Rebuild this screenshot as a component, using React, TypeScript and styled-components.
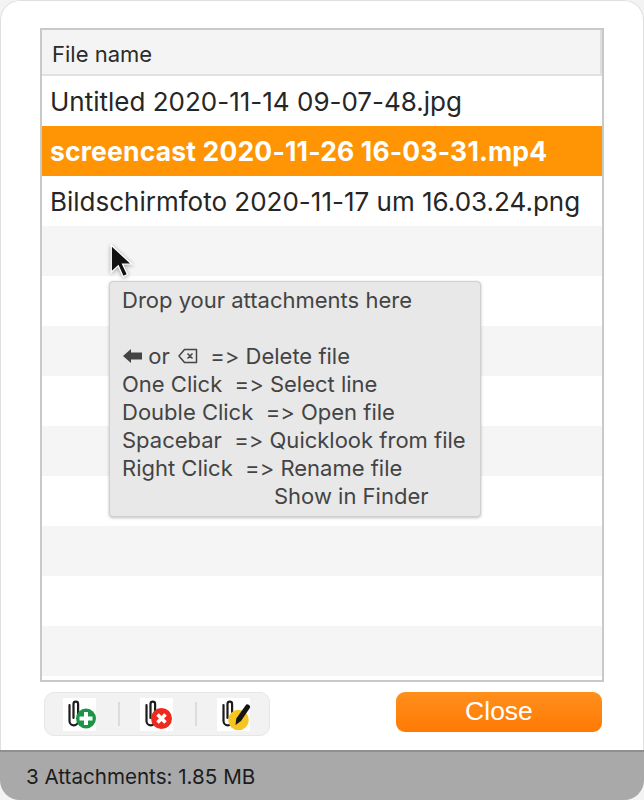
import styled, { createGlobalStyle } from "styled-components";

const GlobalStyle = createGlobalStyle`
  html, body {
    margin: 0;
    padding: 0;
    background: #f3f3f3;
  }
`

const Window = styled.div`
  position: relative;
  width: 644px;
  height: 800px;
  box-sizing: border-box;
  display: flex;
  flex-direction: column;
  overflow: hidden;
  background: #fff;
  border-radius: 20px;
  box-shadow: inset 0 0 0 1px #e0e0e0;
  font-family: Inter, "Noto Sans", sans-serif;
  font-variant-ligatures: none;
  font-feature-settings: "calt" 0, "liga" 0;
  color: #262626;
`

const Content = styled.div`
  flex: 1;
  display: flex;
  flex-direction: column;
  padding: 28px 40px 0;
`

const TableFrame = styled.div`
  height: 654px;
  box-sizing: border-box;
  border: 2px solid #c9c9c9;
  display: flex;
  flex-direction: column;
  overflow: hidden;
`

const Header = styled.div`
  height: 44px;
  flex: none;
  box-sizing: border-box;
  padding: 3px 0 0 10px;
  display: flex;
  align-items: center;
  background: #f4f4f4;
  border-right: 2px solid #dedede;
  font-size: 22px;
  color: #2b2b2b;
`

const HeaderRule = styled.div`
  height: 2px;
  flex: none;
  background: #e2e2e2;
`

const Row = styled.div<{ $tone: "plain" | "stripe" | "selected" }>`
  height: 50px;
  flex: none;
  box-sizing: border-box;
  padding-left: 8px;
  display: flex;
  align-items: center;
  font-size: ${p => (p.$tone === "selected" ? "26.5px" : "26px")};
  font-weight: ${p => (p.$tone === "selected" ? 700 : 400)};
  letter-spacing: ${p => (p.$tone === "selected" ? "0.17px" : "0")};
  color: ${p => (p.$tone === "selected" ? "#fff" : "#262626")};
  background: ${p =>
    p.$tone === "selected" ? "#ff9505" : p.$tone === "stripe" ? "#f5f5f5" : "#fff"};
`

const Tooltip = styled.div`
  position: absolute;
  left: 109px;
  top: 281px;
  width: 372px;
  height: 236px;
  box-sizing: border-box;
  padding: 4px 0 0 12px;
  background: #e8e8e8;
  border: 1px solid #d0d0d0;
  border-radius: 4px;
  box-shadow: 0 1px 3px rgba(0, 0, 0, 0.25);
  font-size: 22px;
  line-height: 28px;
  color: #444;
  white-space: pre;
`

const TipLine = styled.div`
  height: 28px;
  display: flex;
  align-items: center;
`

const TipIndent = styled(TipLine)`
  padding-left: 152px;
`

const ArrowGlyph = styled.svg`
  flex: none;
  display: block;
  margin-left: 1px;
`

const BackspaceGlyph = styled.svg`
  flex: none;
  display: block;
  margin-left: 2px;
`

const Cursor = styled.svg`
  position: absolute;
  left: 108px;
  top: 242px;
  filter: drop-shadow(0 1px 2px rgba(0, 0, 0, 0.35));
`

const Footer = styled.div`
  display: flex;
  justify-content: space-between;
  align-items: flex-start;
  padding: 10px 2px 0 4px;
`

const ToolGroup = styled.div`
  width: 226px;
  height: 44px;
  box-sizing: border-box;
  display: flex;
  align-items: center;
  padding-left: 18px;
  background: #f2f2f2;
  border: 1px solid #e6e6e6;
  border-radius: 10px;
`

const ToolButton = styled.button`
  width: 33px;
  height: 33px;
  flex: none;
  padding: 0;
  border: none;
  background: #fff;
  display: block;
`

const ToolDivider = styled.span`
  width: 2px;
  height: 24px;
  flex: none;
  margin: 0 20px 0 22px;
  background: #dcdcdc;
`

const CloseButton = styled.button`
  width: 206px;
  height: 40px;
  padding: 0 0 2px;
  border: none;
  border-radius: 9px;
  background: linear-gradient(#ff8f1c, #ff7a05);
  color: #fff;
  font-family: "Liberation Sans", Arial, sans-serif;
  font-size: 26.5px;
  line-height: 34px;
`

const StatusBar = styled.div`
  height: 50px;
  flex: none;
  box-sizing: border-box;
  padding: 0 0 0 26px;
  display: flex;
  align-items: center;
  background: #a9a9aa;
  border-top: 2px solid #8f8f90;
  font-size: 20.6px;
  color: #1c1c1c;
`

const files = [
  "Untitled 2020-11-14 09-07-48.jpg",
  "screencast 2020-11-26 16-03-31.mp4",
  "Bildschirmfoto 2020-11-17 um 16.03.24.png",
]

const tone = (i: number) => (i === 1 ? "selected" : i % 2 === 1 ? "stripe" : "plain")

// shared paperclip for the three toolbar icons
const Clip = () => (
  <path
    d="M10.500 20V6a2.300 2.300 0 0 1 4.600 0V23a4.300 4.300 0 0 1-8.600 0V7"
    fill="none"
    stroke="#1c1c1c"
    strokeWidth="2.200"
    strokeLinecap="round"
  />
)

const App = () => {
  const rows = Array.from({ length: 12 }, (_, i) => (
    <Row key={`row_${i}`} $tone={tone(i)}>{files[i] ?? ""}</Row>
  ))
  return (
    <Window>
      <GlobalStyle />
      <Content>
        <TableFrame>
          <Header>File name</Header>
          <HeaderRule />
          {rows}
        </TableFrame>
        <Footer>
          <ToolGroup>
            <ToolButton aria-label="Add attachment">
              <svg width="33" height="33" viewBox="0 0 33 33">
                <Clip />
                <circle cx="23" cy="20.500" r="10" fill="#1c9447" />
                <path d="M23 14v13M16.500 20.500h13" stroke="#fff" strokeWidth="4" />
              </svg>
            </ToolButton>
            <ToolDivider />
            <ToolButton aria-label="Remove attachment">
              <svg width="33" height="33" viewBox="0 0 33 33">
                <Clip />
                <circle cx="21.500" cy="20.500" r="10.500" fill="#ee2a1e" />
                <path d="M17.500 16.500l8 8M25.500 16.500l-8 8" stroke="#fff" strokeWidth="3.600" />
              </svg>
            </ToolButton>
            <ToolDivider />
            <ToolButton aria-label="Rename attachment">
              <svg width="33" height="33" viewBox="0 0 33 33">
                <Clip />
                <circle cx="21.500" cy="22" r="10.300" fill="#f6c521" />
                <path d="M28.500 7.500a2.500 2.500 0 0 1 4 3L24 23l-5.500 4 .8-6.500z" fill="#151515" />
              </svg>
            </ToolButton>
          </ToolGroup>
          <CloseButton>Close</CloseButton>
        </Footer>
      </Content>
      <StatusBar>3 Attachments: 1.85 MB</StatusBar>

      <Cursor width="26" height="39" viewBox="0 0 24 36">
        <path d="M3 3v25l6.500-6 4.500 10 4-2-4.500-9.500H22z" fill="#111" stroke="#fff" strokeWidth="1.200" />
      </Cursor>

      <Tooltip>
        <TipLine>Drop your attachments here</TipLine>
        <TipLine />
        <TipLine>
          <ArrowGlyph width="19" height="14" viewBox="0 0 19 14">
            <path d="M0 7l8-7v3.500h11v7H8V14z" fill="#444" />
          </ArrowGlyph>
          {" or "}
          <BackspaceGlyph width="20" height="16" viewBox="0 0 20 16">
            <path
              d="M6.500 1.500h12v13h-12L1 8zM9.500 5.500l5 5M14.500 5.500l-5 5"
              fill="none"
              stroke="#444"
              strokeWidth="1.500"
              strokeLinejoin="round"
            />
          </BackspaceGlyph>
          {"  => Delete file"}
        </TipLine>
        <TipLine>{"One Click  => Select line"}</TipLine>
        <TipLine>{"Double Click  => Open file"}</TipLine>
        <TipLine>{"Spacebar  => Quicklook from file"}</TipLine>
        <TipLine>{"Right Click  => Rename file"}</TipLine>
        <TipIndent>Show in Finder</TipIndent>
      </Tooltip>
    </Window>
  )
}

export default App
